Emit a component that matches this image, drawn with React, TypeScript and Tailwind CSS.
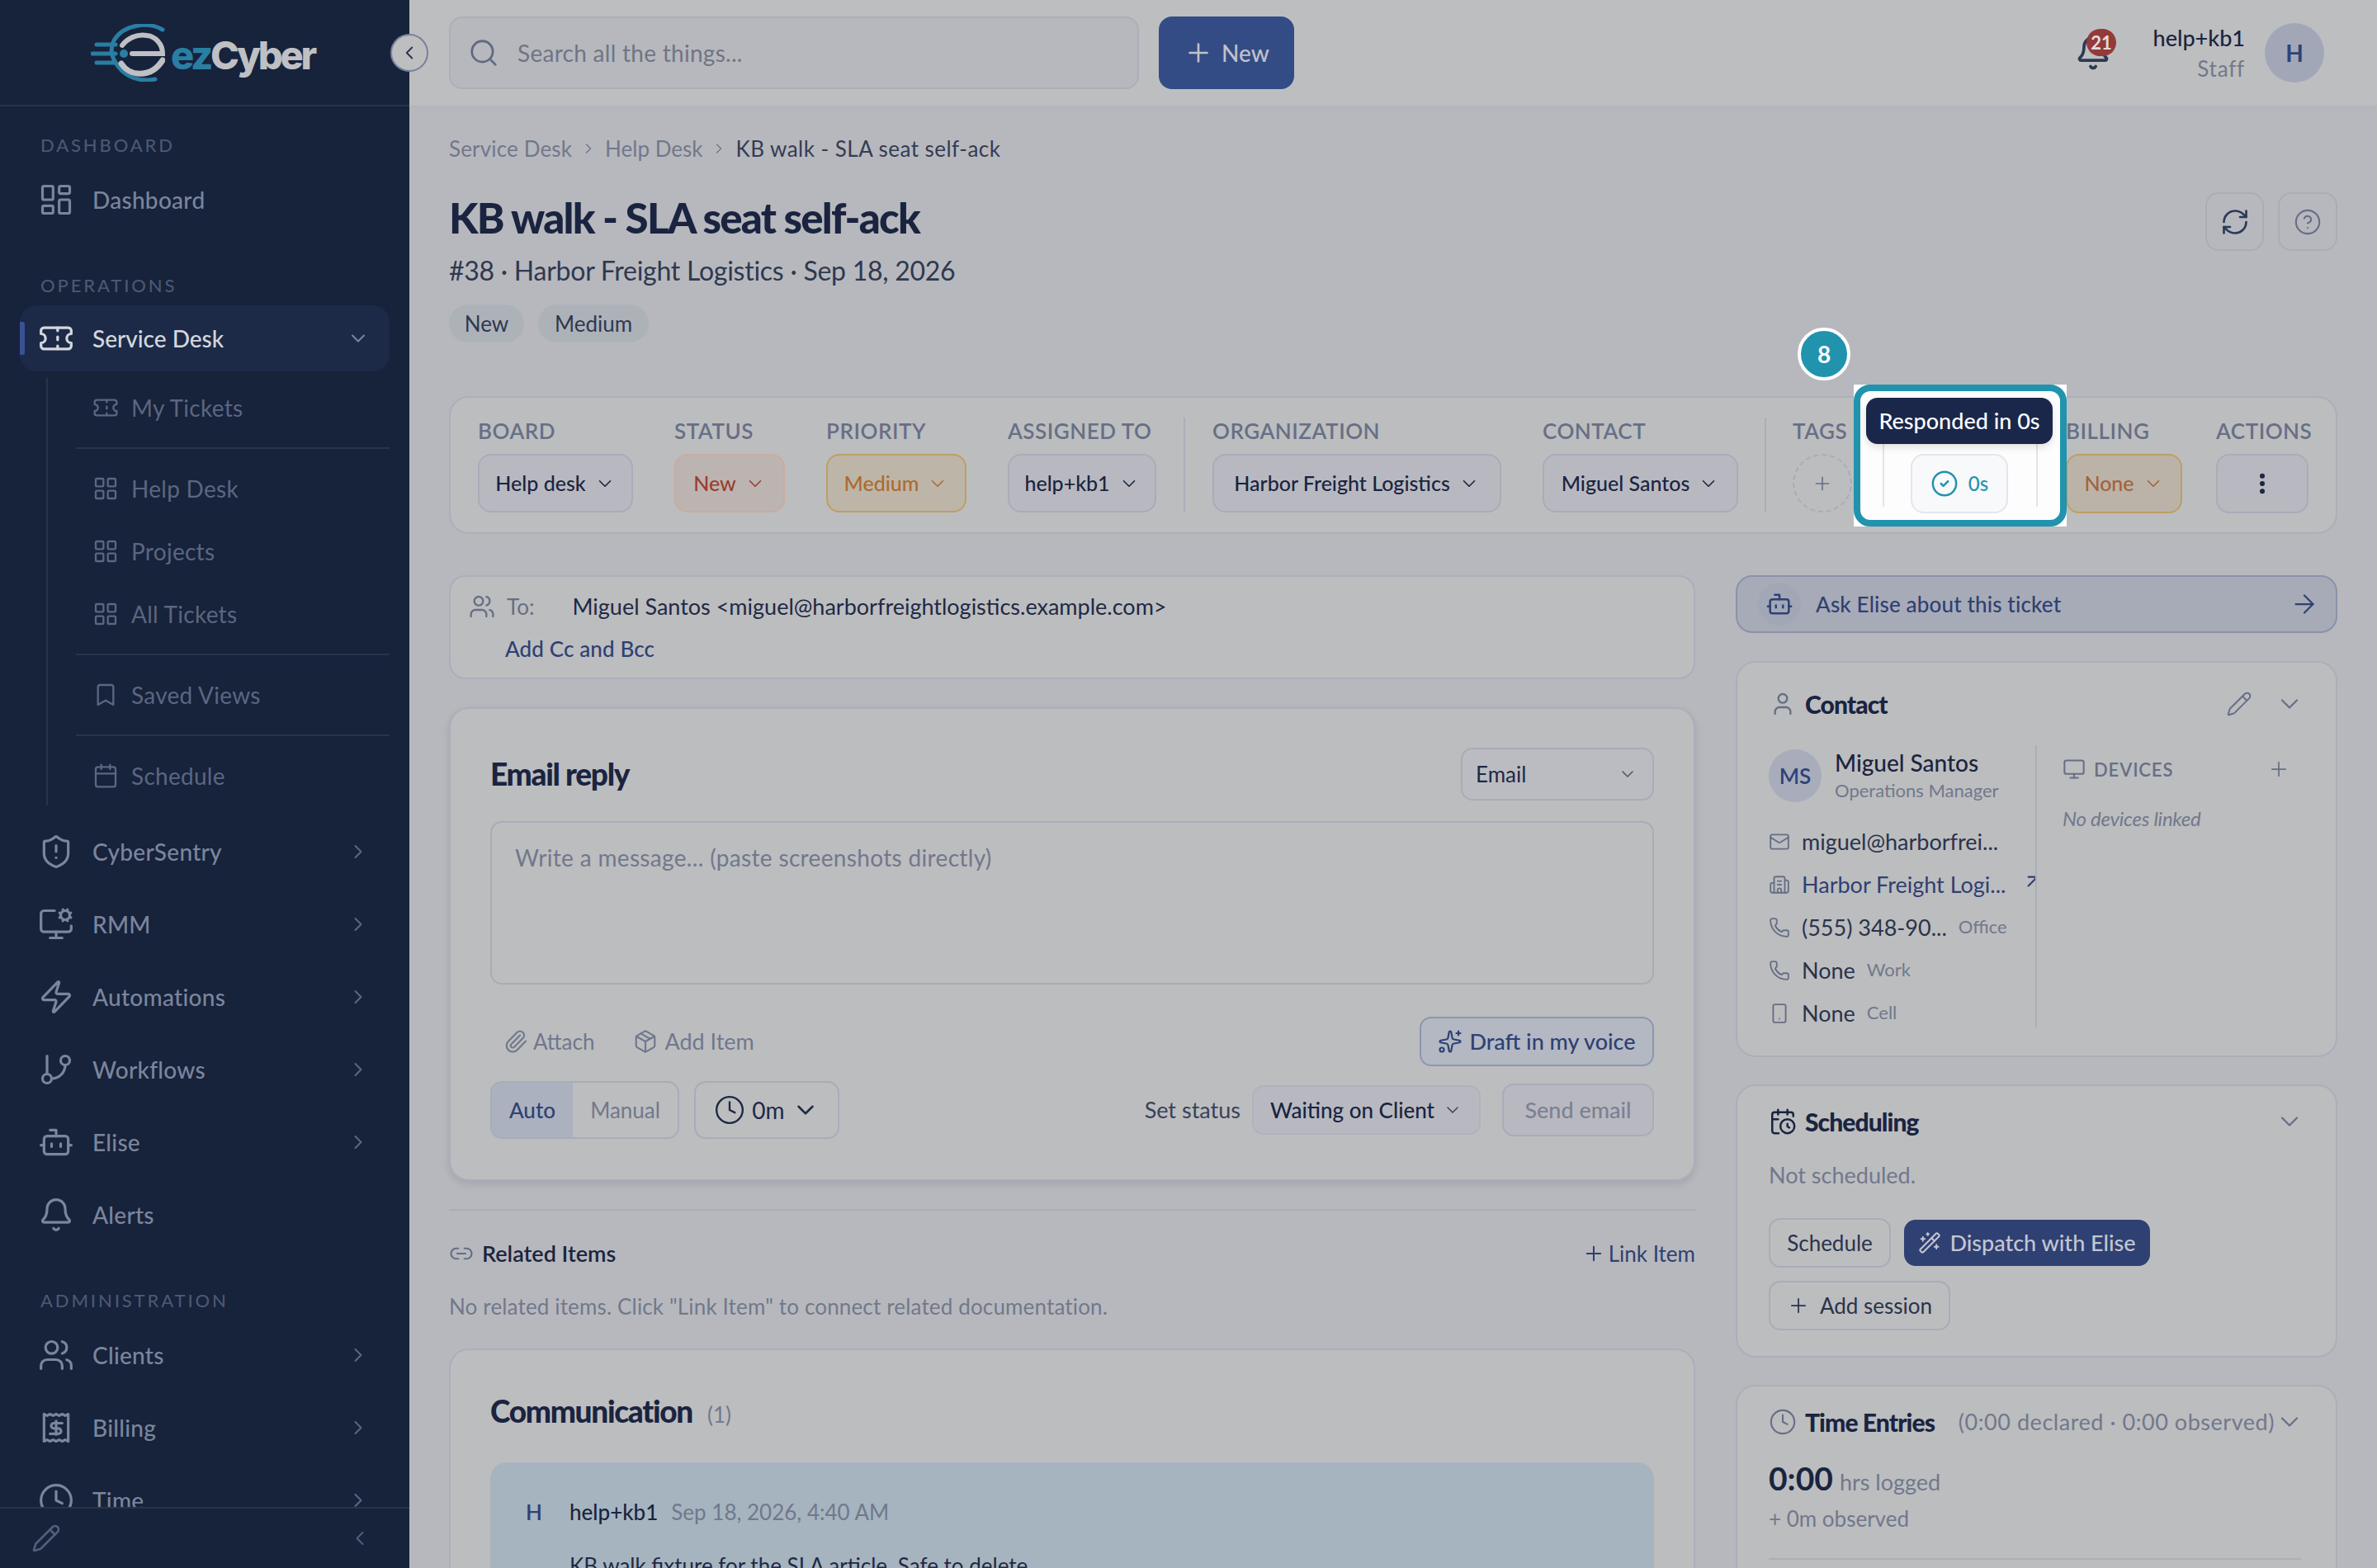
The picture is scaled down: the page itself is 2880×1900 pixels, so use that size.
import {
  ArrowRight,
  ArrowUpRight,
  Bell,
  Bookmark,
  Bot,
  Building2,
  Calendar,
  CalendarClock,
  ChevronDown,
  ChevronLeft,
  ChevronRight,
  CircleCheck,
  CircleHelp,
  Clock,
  EllipsisVertical,
  GitBranch,
  LayoutDashboard,
  LayoutGrid,
  Link2,
  Mail,
  Monitor,
  MonitorCog,
  Package,
  Paperclip,
  Pencil,
  Phone,
  Plus,
  RefreshCw,
  Search,
  ShieldAlert,
  Smartphone,
  Sparkles,
  Ticket,
  User,
  Users,
  WandSparkles,
  Zap,
  type LucideIcon
} from 'lucide-react';
import type { ReactNode } from 'react';

function BillingIcon({ className }: { className?: string }) {
  return (
    <svg viewBox="0 0 24 24" fill="none" stroke="currentColor" strokeWidth="1.75" strokeLinecap="round" strokeLinejoin="round" className={className}>
      <path d="M4 3v18l2-1 2 1 2-1 2 1 2-1 2 1 2-1 2 1V3l-2 1-2-1-2 1-2-1-2 1-2-1-2 1z" />
      <path d="M16 9h-5.5a1.75 1.75 0 0 0 0 3.5h3a1.75 1.75 0 0 1 0 3.5H8M12 7.5v9" />
    </svg>
  );
}

function Logo() {
  return (
    <div className="flex items-center">
      <svg viewBox="0 0 90 70" className="w-[90px] h-[70px]" fill="none">
        <path d="M87 7C70-3 40 0 28 20c-6 12-2 25 10 37 10 9 24 13 40 10" stroke="#2a7ea3" strokeWidth="5" strokeLinecap="round" />
        <path d="M7 25h23M2 36h28M7 47h23" stroke="#2a7ea3" strokeWidth="5" strokeLinecap="round" />
        <circle cx="40" cy="36" r="5" fill="#2a7ea3" />
        <path d="M50 36h37c0-12-9-21-19-22-12-2-23 3-30 12" stroke="#bec0c4" strokeWidth="6" strokeLinecap="round" />
        <path d="M37 48c10 16 36 18 50 -4" stroke="#bec0c4" strokeWidth="7" strokeLinecap="round" />
      </svg>
      <div className="ml-[7px] mt-[6px] text-[47px] leading-none font-extrabold tracking-[-0.07em] font-['Inter',sans-serif]">
        <span className="text-[#2a7ea3]">ez</span>
        <span className="text-[#bec0c4]">Cyber</span>
      </div>
    </div>
  );
}

function SectionLabel({ label, className }: { label: string; className: string }) {
  return <div className={`h-[30px] pl-[49px] text-[22px] leading-[30px] font-medium tracking-[0.13em] text-[#4c5770] ${className}`}>{label}</div>;
}

function NavItem({ icon: Icon, label, arrow = true }: { icon: LucideIcon | typeof BillingIcon; label: string; arrow?: boolean }) {
  return (
    <div className="h-[80px] shrink-0 flex items-center pl-[46px] pr-[48px] text-[#7b859c]">
      <Icon className="w-[44px] h-[44px] shrink-0" strokeWidth={1.75} />
      <span className="ml-[22px] text-[28px] font-medium tracking-[0.01em]">{label}</span>
      {arrow && <ChevronRight className="ml-auto w-[28px] h-[28px] text-[#5c6780]" strokeWidth={1.75} />}
    </div>
  );
}

function SubItem({ icon: Icon, label }: { icon: LucideIcon; label: string }) {
  return (
    <div className="h-[72px] flex items-center pl-[20px] text-[#5b6680]">
      <Icon className="w-[32px] h-[32px]" strokeWidth={1.75} />
      <span className="ml-[15px] text-[28px] tracking-[0.01em]">{label}</span>
    </div>
  );
}

function Sidebar() {
  return (
    <aside className="relative w-[496px] h-full shrink-0 flex flex-col bg-[#17223b]">
      <div className="h-[129px] shrink-0 border-b-2 border-[#28324a] flex items-center pl-[110px]">
        <Logo />
      </div>
      <div className="flex-1 min-h-0 overflow-hidden flex flex-col">
        <SectionLabel label="DASHBOARD" className="mt-[32px]" />
        <div className="mt-[11px]">
          <NavItem icon={LayoutDashboard} label="Dashboard" arrow={false} />
        </div>
        <SectionLabel label="OPERATIONS" className="mt-[49px]" />
        <div className="relative mt-[9px] mx-[24px] h-[80px] shrink-0 flex items-center pl-[22px] pr-[24px] rounded-[20px] bg-[#1c2a48] text-[#d5d7dc]">
          <div className="absolute left-0 top-[20px] w-[6px] h-[40px] rounded-r-[3px] bg-[#3a5294]" />
          <Ticket className="w-[44px] h-[44px]" strokeWidth={1.75} />
          <span className="ml-[22px] text-[28px] font-medium">Service Desk</span>
          <ChevronDown className="ml-auto w-[28px] h-[28px] text-[#7b859c]" strokeWidth={1.75} />
        </div>
        <div className="mt-[8px] ml-[56px] mr-[24px] pl-[34px] border-l-2 border-[#2a3349] flex flex-col gap-[4px] shrink-0">
          <SubItem icon={Ticket} label="My Tickets" />
          <div className="my-[8px] h-[2px] bg-[#2a3349]" />
          <SubItem icon={LayoutGrid} label="Help Desk" />
          <SubItem icon={LayoutGrid} label="Projects" />
          <SubItem icon={LayoutGrid} label="All Tickets" />
          <div className="my-[8px] h-[2px] bg-[#2a3349]" />
          <SubItem icon={Bookmark} label="Saved Views" />
          <div className="my-[8px] h-[2px] bg-[#2a3349]" />
          <SubItem icon={Calendar} label="Schedule" />
        </div>
        <div className="mt-[16px] flex flex-col gap-[8px] shrink-0">
          <NavItem icon={ShieldAlert} label="CyberSentry" />
          <NavItem icon={MonitorCog} label="RMM" />
          <NavItem icon={Zap} label="Automations" />
          <NavItem icon={GitBranch} label="Workflows" />
          <NavItem icon={Bot} label="Elise" />
          <NavItem icon={Bell} label="Alerts" arrow={false} />
        </div>
        <SectionLabel label="ADMINISTRATION" className="mt-[49px]" />
        <div className="mt-[11px] flex flex-col gap-[8px] shrink-0">
          <NavItem icon={Users} label="Clients" />
          <NavItem icon={BillingIcon} label="Billing" />
          <NavItem icon={Clock} label="Time" />
        </div>
      </div>
      <div className="h-[74px] shrink-0 border-t-2 border-[#28324a] flex items-center justify-between pl-[38px] pr-[46px] text-[#535e78]">
        <Pencil className="w-[36px] h-[36px]" strokeWidth={1.75} />
        <ChevronLeft className="w-[28px] h-[28px]" strokeWidth={1.75} />
      </div>
      <button className="absolute left-[473px] top-[41px] w-[46px] h-[46px] rounded-full bg-[#bdbec0] border-2 border-[#77829b] flex items-center justify-center text-[#2b3550]">
        <ChevronLeft className="w-[26px] h-[26px]" strokeWidth={1.75} />
      </button>
    </aside>
  );
}

function TopBar() {
  return (
    <header className="h-[132px] shrink-0 flex items-center pl-[48px] pr-[64px] bg-[#bdbec0] border-b-4 border-[#b5b6bb]">
      <div className="w-[836px] h-[88px] rounded-[16px] bg-[#b7b8bd] border-2 border-[#acaeb9] flex items-center pl-[21px]">
        <Search className="w-[38px] h-[38px] text-[#616a80]" strokeWidth={1.75} />
        <span className="ml-[22px] text-[28px] text-[#6f7585] tracking-[0.01em]">Search all the things...</span>
      </div>
      <button className="ml-[24px] w-[164px] h-[88px] rounded-[16px] bg-[#344c85] flex items-center justify-center gap-[10px] text-[#bfc2c9]">
        <Plus className="w-[36px] h-[36px]" strokeWidth={1.75} />
        <span className="text-[28px] font-medium">New</span>
      </button>
      <div className="relative ml-auto w-[44px] h-[44px] mr-[54px]">
        <Bell className="absolute left-0 top-0 w-[44px] h-[44px] text-[#2c3956]" strokeWidth={2} />
        <div className="absolute left-[14px] top-[-7px] w-[36px] h-[33px] rounded-full bg-[#933a3a] flex items-center justify-center text-[#e4dcdc] text-[22px] font-bold">21</div>
      </div>
      <div className="w-[108px] flex flex-col items-end whitespace-nowrap">
        <span className="text-[27px] leading-[38px] font-medium text-[#1a2440]">help+kb1</span>
        <span className="text-[26px] leading-[36px] text-[#71788c] tracking-[0.03em]">Staff</span>
      </div>
      <div className="ml-[24px] w-[72px] h-[72px] rounded-full bg-[#a2a7b8] flex items-center justify-center text-[28px] font-bold text-[#2d4278]">H</div>
    </header>
  );
}

function FieldCol({ label, width, children }: { label: string; width: string; children: ReactNode }) {
  return (
    <div className={`flex flex-col gap-[12px] ${width}`}>
      <div className="h-[32px] text-[26px] leading-[32px] font-semibold tracking-[0.02em] text-[#676f86] whitespace-nowrap">{label}</div>
      {children}
    </div>
  );
}

function Pick({ text, tone = 'text-[#1a2440]', box = 'bg-[#b8b9c0] border-[#a9acb8]' }: { text: string; tone?: string; box?: string }) {
  return (
    <div className={`h-[72px] rounded-[16px] border-2 flex items-center justify-center gap-[10px] ${box}`}>
      <span className={`text-[25px] font-medium ${tone}`}>{text}</span>
      <ChevronDown className={`w-[26px] h-[26px] ${tone}`} strokeWidth={1.5} />
    </div>
  );
}

function Divider() {
  return <div className="w-[2px] h-full bg-[#acaeb9]" />;
}

function PropertyPanel() {
  return (
    <section className="relative mt-[65px] h-[167px] rounded-[24px] bg-[#bcbdbf] border-2 border-[#acaeb9] flex items-stretch py-[24px] pl-[33px]">
      <div className="flex gap-[50px]">
        <FieldCol label="BOARD" width="w-[188px]"><Pick text="Help desk" /></FieldCol>
        <FieldCol label="STATUS" width="w-[134px]"><Pick text="New" tone="text-[#9a3d2f]" box="bg-[#bcb4b0] border-[#c8aca0]" /></FieldCol>
        <FieldCol label="PRIORITY" width="w-[170px]"><Pick text="Medium" tone="text-[#ad6a2f]" box="bg-[#bdb5a8] border-[#bd9f63]" /></FieldCol>
        <FieldCol label="ASSIGNED TO" width="w-[180px]"><Pick text="help+kb1" /></FieldCol>
      </div>
      <div className="mx-[33px]"><Divider /></div>
      <div className="flex gap-[50px]">
        <FieldCol label="ORGANIZATION" width="w-[350px]"><Pick text="Harbor Freight Logistics" /></FieldCol>
        <FieldCol label="CONTACT" width="w-[237px]"><Pick text="Miguel Santos" /></FieldCol>
      </div>
      <div className="mx-[32px]"><Divider /></div>
      <FieldCol label="TAGS" width="w-[72px]">
        <div className="w-[72px] h-[72px] rounded-full border-2 border-dashed border-[#a9acb8] flex items-center justify-center text-[#676f86]">
          <Plus className="w-[26px] h-[26px]" strokeWidth={1.5} />
        </div>
      </FieldCol>
      <div className="ml-[259px]">
        <FieldCol label="BILLING" width="w-[141px]"><Pick text="None" tone="text-[#a5613a]" box="bg-[#bbb3a7] border-[#bd9f63]" /></FieldCol>
      </div>
      <div className="ml-[41px]">
        <FieldCol label="ACTIONS" width="w-[112px]">
          <div className="h-[72px] rounded-[16px] border-2 border-[#a9acb8] bg-[#b8b9c0] flex items-center justify-center text-[#1a2440]">
            <EllipsisVertical className="w-[32px] h-[32px]" strokeWidth={2.5} />
          </div>
        </FieldCol>
      </div>
      {/* step badge and spotlight over the SLA column */}
      <div className="absolute left-[1632px] top-[-85px] w-[64px] h-[64px] rounded-full bg-[#2193ad] border-4 border-white flex items-center justify-center text-[28px] font-bold text-white">8</div>
      <div className="absolute left-[1700px] top-[-16px] w-[258px] h-[172px] bg-white">
        <div className="relative w-full h-full rounded-[20px] border-8 border-[#2193ad] bg-[#fdfdfe]">
          <div className="absolute left-[27px] top-[64px] w-[2px] h-[76px] bg-[#e2e4ea]" />
          <div className="absolute left-[213px] top-[64px] w-[2px] h-[76px] bg-[#e2e4ea]" />
          <div className="absolute left-[61px] top-[76px] w-[118px] h-[72px] rounded-[16px] border-2 border-[#e4e6eb] bg-[#f8f9fa] flex items-center justify-center gap-[12px] text-[#2193ad]">
            <CircleCheck className="w-[34px] h-[34px]" strokeWidth={1.75} />
            <span className="text-[24px] font-medium">0s</span>
          </div>
          <div className="absolute left-[7px] top-[8px] w-[226px] h-[56px] rounded-[14px] bg-[#1a274b] shadow-[0_4px_8px_rgba(0,0,0,0.12)] flex items-center justify-center text-[27px] font-medium text-white">Responded in 0s</div>
        </div>
      </div>
    </section>
  );
}

function LeftColumn() {
  return (
    <div className="w-[1510px] flex flex-col">
      <div className="h-[126px] rounded-[20px] bg-[#bcbdbf] border-2 border-[#acaeb9] pl-[22px] pt-[16px]">
        <div className="flex items-center h-[40px]">
          <Users className="w-[32px] h-[32px] text-[#676f86]" strokeWidth={1.75} />
          <span className="ml-[14px] text-[26px] text-[#676f86]">To:</span>
          <span className="ml-[46px] text-[27px] text-[#1f2944]">{'Miguel Santos <miguel@harborfreightlogistics.example.com>'}</span>
        </div>
        <div className="mt-[12px] ml-[44px] text-[26px] font-medium tracking-[0.005em] text-[#2f4073]">Add Cc and Bcc</div>
      </div>

      <div className="mt-[34px] h-[574px] rounded-[24px] bg-[#bcbdbf] border-2 border-[#acaeb9] shadow-[0_4px_8px_rgba(60,65,85,0.15)] px-[48px] pt-[47px] flex flex-col">
        <div className="flex items-center justify-between h-[64px]">
          <h2 className="text-[37px] font-black tracking-[-0.035em] text-[#1a2440]">Email reply</h2>
          <div className="w-[234px] h-[64px] rounded-[14px] border-2 border-[#a9acb8] bg-[#bbbcc1] flex items-center justify-between pl-[16px] pr-[18px]">
            <span className="text-[26px] text-[#1f2944]">Email</span>
            <ChevronDown className="w-[24px] h-[24px] text-[#4a536c]" strokeWidth={1.5} />
          </div>
        </div>
        <div className="mt-[25px] h-[198px] rounded-[14px] border-2 border-[#a9acb8] pl-[28px] pt-[24px] text-[28px] leading-[36px] tracking-[0.012em] text-[#71788c]">Write a message... (paste screenshots directly)</div>
        <div className="mt-[39px] h-[60px] flex items-center">
          <div className="flex items-center gap-[6px] pl-[16px] text-[#71788c]">
            <Paperclip className="w-[30px] h-[30px]" strokeWidth={1.75} />
            <span className="text-[26px]">Attach</span>
          </div>
          <div className="ml-[47px] flex items-center gap-[8px] text-[#71788c]">
            <Package className="w-[30px] h-[30px]" strokeWidth={1.75} />
            <span className="text-[27px]">Add Item</span>
          </div>
          <div className="ml-auto w-[284px] h-[60px] rounded-[14px] bg-[#b3b8c3] border-2 border-[#8b97b2] flex items-center justify-center gap-[8px] text-[#2f4073]">
            <Sparkles className="w-[30px] h-[30px]" strokeWidth={1.75} />
            <span className="text-[27px] font-medium">Draft in my voice</span>
          </div>
        </div>
        <div className="mt-[18px] h-[70px] flex items-center">
          <div className="w-[229px] h-[70px] rounded-[14px] border-2 border-[#a9acb8] flex overflow-hidden">
            <div className="w-[98px] bg-[#abb1bf] flex items-center justify-center text-[26px] font-medium text-[#2f4073]">Auto</div>
            <div className="flex-1 flex items-center justify-center text-[26px] text-[#71788c]">Manual</div>
          </div>
          <div className="ml-[18px] w-[176px] h-[70px] rounded-[14px] border-2 border-[#a9acb8] flex items-center justify-center gap-[8px] text-[#1f2944]">
            <Clock className="w-[38px] h-[38px]" strokeWidth={1.5} />
            <span className="text-[28px]">0m</span>
            <ChevronDown className="w-[34px] h-[34px]" strokeWidth={1.75} />
          </div>
          <span className="ml-auto text-[27px] text-[#3a4258]">Set status</span>
          <div className="ml-[14px] w-[277px] h-[60px] rounded-[14px] border-2 border-[#b0b2bc] bg-[#b8b9c0] flex items-center justify-center gap-[10px]">
            <span className="text-[26px] font-medium text-[#1a2440]">Waiting on Client</span>
            <ChevronDown className="w-[24px] h-[24px] text-[#3a4258]" strokeWidth={1.5} />
          </div>
          <div className="ml-[26px] w-[184px] h-[64px] rounded-[14px] border-2 border-[#a9acb8] bg-[#b8b9c0] flex items-center justify-center text-[27px] font-medium text-[#7b8194]">Send email</div>
        </div>
      </div>

      <div className="mt-[34px] h-[2px] bg-[#a9adb8]" />
      <div className="mt-[34px] h-[36px] flex items-center justify-between">
        <div className="flex items-center gap-[10px]">
          <Link2 className="w-[30px] h-[30px] text-[#676f86]" strokeWidth={1.75} />
          <span className="text-[27px] font-semibold text-[#1a2440]">Related Items</span>
        </div>
        <div className="flex items-center gap-[4px] text-[#2f4073]">
          <Plus className="w-[28px] h-[28px]" strokeWidth={1.75} />
          <span className="text-[26px]">Link Item</span>
        </div>
      </div>
      <p className="mt-[28px] text-[26px] leading-[36px] tracking-[0.006em] text-[#71788c]">No related items. Click "Link Item" to connect related documentation.</p>

      <div className="mt-[33px] h-[400px] rounded-[24px] bg-[#bcbdbf] border-2 border-[#acaeb9] px-[48px] pt-[46px]">
        <div className="flex items-baseline gap-[18px] h-[52px]">
          <h2 className="text-[37px] font-black tracking-[-0.035em] text-[#1a2440]">Communication</h2>
          <span className="text-[26px] text-[#71788c]">(1)</span>
        </div>
        <div className="mt-[38px] h-[300px] rounded-[20px] bg-[#a6b4bf] pl-[43px] pt-[43px]">
          <div className="flex items-center h-[34px]">
            <span className="w-[53px] text-[26px] font-semibold text-[#2f4073]">H</span>
            <span className="text-[26px] font-medium text-[#1a2440]">help+kb1</span>
            <span className="ml-[16px] text-[26px] text-[#71788c]">Sep 18, 2026, 4:40 AM</span>
          </div>
          <p className="mt-[30px] ml-[53px] text-[26px] leading-[36px] text-[#1f2944]">KB walk fixture for the SLA article. Safe to delete.</p>
        </div>
      </div>
    </div>
  );
}

function ContactLine({ icon: Icon, text, note, link }: { icon: LucideIcon; text: string; note?: string; link?: boolean }) {
  return (
    <div className="h-[52px] flex items-center">
      <Icon className="w-[26px] h-[26px] shrink-0 text-[#676f86]" strokeWidth={1.75} />
      <span className={`ml-[14px] text-[27px] ${link ? 'text-[#2f4073]' : 'text-[#2a334c]'}`}>{text}</span>
      {note && <span className="ml-[14px] mb-[4px] text-[22px] text-[#71788c]">{note}</span>}
    </div>
  );
}

function RightColumn() {
  return (
    <div className="ml-[49px] flex-1 flex flex-col">
      <div className="h-[70px] rounded-[20px] bg-[#a7abb8] border-2 border-[#8b93a9] flex items-center pl-[25px] pr-[20px] text-[#2f4073]">
        <div className="w-[52px] h-[52px] rounded-full bg-[#a2a7b6] flex items-center justify-center">
          <Bot className="w-[34px] h-[34px]" strokeWidth={1.75} />
        </div>
        <span className="ml-[18px] text-[26px] font-medium tracking-[0.006em]">Ask Elise about this ticket</span>
        <ArrowRight className="ml-auto w-[36px] h-[36px]" strokeWidth={1.5} />
      </div>

      <div className="mt-[34px] h-[480px] rounded-[24px] bg-[#bcbdbf] border-2 border-[#acaeb9] pl-[38px] pr-[38px]">
        <div className="h-[100px] flex items-center">
          <User className="w-[32px] h-[32px] ml-[1px] text-[#676f86]" strokeWidth={1.75} />
          <span className="ml-[11px] text-[30px] font-black tracking-[-0.03em] text-[#1a2440]">Contact</span>
          <Pencil className="ml-auto w-[32px] h-[32px] text-[#676f86]" strokeWidth={1.5} />
          <ChevronDown className="ml-[27px] w-[36px] h-[36px] text-[#676f86]" strokeWidth={1.5} />
        </div>
        <div className="flex h-[342px]">
          <div className="w-[325px] overflow-hidden border-r-2 border-[#acaeb9]">
            <div className="flex items-center h-[64px] mt-[5px]">
              <div className="w-[64px] h-[64px] rounded-full bg-[#a8acbb] flex items-center justify-center text-[26px] font-semibold text-[#2d4278]">MS</div>
              <div className="ml-[16px] flex flex-col">
                <span className="text-[28px] leading-[36px] font-medium text-[#1a2440]">Miguel Santos</span>
                <span className="text-[22px] leading-[32px] text-[#71788c]">Operations Manager</span>
              </div>
            </div>
            <div className="mt-[22px] flex flex-col">
              <ContactLine icon={Mail} text="miguel@harborfrei..." />
              <div className="relative">
                <ContactLine icon={Building2} text="Harbor Freight Logi..." link />
                <ArrowUpRight className="absolute left-[307px] top-[9px] w-[26px] h-[26px] text-[#2f4073]" strokeWidth={2} />
              </div>
              <ContactLine icon={Phone} text="(555) 348-90..." note="Office" />
              <ContactLine icon={Phone} text="None" note="Work" />
              <ContactLine icon={Smartphone} text="None" note="Cell" />
            </div>
          </div>
          <div className="flex-1 pl-[31px] pt-[14px]">
            <div className="flex items-center h-[30px] text-[#676f86]">
              <Monitor className="w-[28px] h-[28px]" strokeWidth={1.75} />
              <span className="ml-[10px] text-[22px] font-semibold tracking-[0.04em]">DEVICES</span>
              <Plus className="ml-auto mr-[17px] w-[28px] h-[28px]" strokeWidth={1.5} />
            </div>
            <div className="mt-[27px] text-[24px] italic tracking-[-0.01em] text-[#71788c]">No devices linked</div>
          </div>
        </div>
      </div>

      <div className="mt-[33px] h-[331px] rounded-[24px] bg-[#bcbdbf] border-2 border-[#acaeb9] pl-[38px] pr-[38px]">
        <div className="h-[86px] flex items-center">
          <CalendarClock className="w-[34px] h-[34px] text-[#1a2440]" strokeWidth={1.75} />
          <span className="ml-[10px] text-[30px] font-black tracking-[-0.03em] text-[#1a2440]">Scheduling</span>
          <ChevronDown className="ml-auto w-[36px] h-[36px] text-[#676f86]" strokeWidth={1.5} />
        </div>
        <p className="mt-[4px] text-[27px] leading-[36px] text-[#71788c]">Not scheduled.</p>
        <div className="mt-[34px] flex items-center gap-[16px]">
          <div className="w-[148px] h-[60px] rounded-[14px] border-2 border-[#a9acb8] flex items-center justify-center text-[26px] text-[#2a334c]">Schedule</div>
          <div className="w-[298px] h-[56px] rounded-[14px] bg-[#2f4073] flex items-center justify-center gap-[10px] text-[#c3c6cf]">
            <WandSparkles className="w-[28px] h-[28px]" strokeWidth={1.75} />
            <span className="text-[27px] font-medium">Dispatch with Elise</span>
          </div>
        </div>
        <div className="mt-[16px] w-[220px] h-[60px] rounded-[14px] border-2 border-[#a9acb8] flex items-center justify-center gap-[12px] text-[#2a334c]">
          <Plus className="w-[28px] h-[28px]" strokeWidth={1.5} />
          <span className="text-[26px]">Add session</span>
        </div>
      </div>

      <div className="mt-[33px] h-[400px] rounded-[24px] bg-[#bcbdbf] border-2 border-[#acaeb9] pl-[38px] pr-[38px]">
        <div className="h-[86px] flex items-center">
          <Clock className="w-[34px] h-[34px] text-[#676f86]" strokeWidth={1.5} />
          <span className="ml-[10px] text-[30px] font-black tracking-[-0.03em] text-[#1a2440]">Time Entries</span>
          <span className="ml-auto text-[27px] tracking-[0.02em] text-[#71788c]">(0:00 declared · 0:00 observed)</span>
          <ChevronDown className="w-[36px] h-[36px] text-[#676f86]" strokeWidth={1.5} />
        </div>
        <div className="mt-[1px] flex items-baseline gap-[8px]">
          <span className="text-[39px] leading-[48px] font-bold text-[#1a2440]">0:00</span>
          <span className="text-[27px] text-[#71788c]">hrs logged</span>
        </div>
        <p className="mt-[5px] text-[26px] leading-[36px] text-[#71788c]">+ 0m observed</p>
        <div className="mt-[30px] mr-[4px] h-[2px] bg-[#acaeb9]" />
      </div>
    </div>
  );
}

export default function App() {
  return (
    <div className="w-[2880px] h-[1900px] overflow-hidden flex bg-[#b7b8bd] font-['Lato',sans-serif]">
      <Sidebar />
      <main className="flex-1 min-w-0 flex flex-col overflow-hidden">
        <TopBar />
        <div className="pl-[48px] pr-[48px] pt-[30px]">
          <nav className="flex items-center h-[36px] text-[26px] text-[#71788c]">
            <span className="tracking-[0.006em]">Service Desk</span>
            <ChevronRight className="mx-[10px] w-[20px] h-[20px]" strokeWidth={1.75} />
            <span>Help Desk</span>
            <ChevronRight className="mx-[10px] w-[20px] h-[20px]" strokeWidth={1.75} />
            <span className="tracking-[0.018em] text-[#343c54]">KB walk - SLA seat self-ack</span>
          </nav>
          <div className="mt-[35px] flex items-start justify-between">
            <div>
              <h1 className="h-[64px] text-[51px] leading-[62px] font-black tracking-[-0.035em] text-[#1a2440]">KB walk - SLA seat self-ack</h1>
              <p className="mt-[11px] h-[40px] text-[32px] leading-[40px] tracking-[-0.008em] text-[#2f3850]">#38 · Harbor Freight Logistics · Sep 18, 2026</p>
              <div className="mt-[21px] flex gap-[17px]">
                <span className="w-[91px] h-[46px] rounded-full bg-[#adb2b9] flex items-center justify-center text-[26px] text-[#2f3850]">New</span>
                <span className="w-[134px] h-[46px] rounded-full bg-[#adb2b9] flex items-center justify-center text-[26px] text-[#2f3850]">Medium</span>
              </div>
            </div>
            <div className="flex gap-[17px]">
              <div className="w-[71px] h-[71px] rounded-[16px] border-2 border-[#a9adb8] flex items-center justify-center text-[#2c3956]">
                <RefreshCw className="w-[36px] h-[36px]" strokeWidth={1.75} />
              </div>
              <div className="w-[72px] h-[71px] rounded-[16px] border-2 border-[#a9adb8] flex items-center justify-center text-[#676f86]">
                <CircleHelp className="w-[34px] h-[34px]" strokeWidth={1.5} />
              </div>
            </div>
          </div>
          <PropertyPanel />
          <div className="mt-[50px] flex items-start">
            <LeftColumn />
            <RightColumn />
          </div>
        </div>
      </main>
    </div>
  );
}
